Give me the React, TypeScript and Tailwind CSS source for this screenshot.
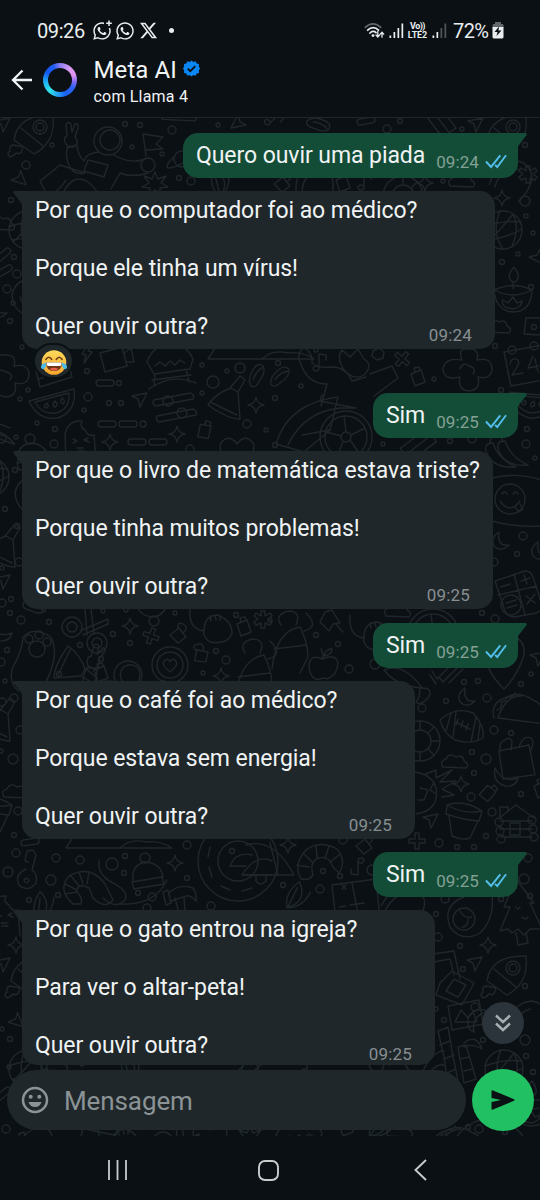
import type { ReactNode } from "react";
import { FaWhatsapp, FaXTwitter } from "react-icons/fa6";

type Message = {
  id: number;
  from: "me" | "ai";
  lines: string[];
  time: string;
  gap: string;
  size: string;
  reaction?: boolean;
};

const messages: Message[] = [
  { id: 1, from: "me", lines: ["Quero ouvir uma piada"], time: "09:24", gap: "mt-[15px]", size: "w-[335px]" },
  {
    id: 2,
    from: "ai",
    lines: ["Por que o computador foi ao médico?", "Porque ele tinha um vírus!", "Quer ouvir outra?"],
    time: "09:24",
    gap: "mt-[13px]",
    size: "h-[158px] w-[473px]",
    reaction: true,
  },
  { id: 3, from: "me", lines: ["Sim"], time: "09:25", gap: "mt-[44px]", size: "w-[145px]" },
  {
    id: 4,
    from: "ai",
    lines: ["Por que o livro de matemática estava triste?", "Porque tinha muitos problemas!", "Quer ouvir outra?"],
    time: "09:25",
    gap: "mt-[13px]",
    size: "h-[158px] w-[471px]",
  },
  { id: 5, from: "me", lines: ["Sim"], time: "09:25", gap: "mt-[14px]", size: "w-[145px]" },
  {
    id: 6,
    from: "ai",
    lines: ["Por que o café foi ao médico?", "Porque estava sem energia!", "Quer ouvir outra?"],
    time: "09:25",
    gap: "mt-[13px]",
    size: "h-[158px] w-[393px]",
  },
  { id: 7, from: "me", lines: ["Sim"], time: "09:25", gap: "mt-[13px]", size: "w-[145px]" },
  {
    id: 8,
    from: "ai",
    lines: ["Por que o gato entrou na igreja?", "Para ver o altar-peta!", "Quer ouvir outra?"],
    time: "09:25",
    gap: "mt-[13px]",
    size: "h-[155px] w-[413px]",
  },
];

// Wallpaper doodles, each one drawn around its own origin
const doodles: Record<string, ReactNode> = {
  rocket: (
    <>
      <path d="M-19 4 C-17 -12 -4 -22 20 -21 C22 -2 16 10 1 18 Z M-19 4 L1 18 M-12 -8 L10 10" />
      <circle cx="7" cy="-9" r="7" />
      <circle cx="7" cy="-9" r="4" />
      <path d="M-20 9 q-4 1 -3 6 q-4 2 0 6 q4 -1 6 -4 q5 2 6 -3 q2 -4 -3 -4 z" />
    </>
  ),
  astronaut: (
    <>
      <circle cx="0" cy="0" r="14" />
      <circle cx="2" cy="-1" r="10" />
      <path d="M-9 11 Q-22 12 -24 20 Q-30 15 -31 4 L-41 7 Q-43 18 -37 28 Q-32 34 -23 32 M4 13 Q22 24 37 18 M40 32 Q24 37 12 32 L3 48 M-23 32 L-48 24 Q-60 34 -68 40 L-60 56 Q-48 49 -42 39" />
      <path d="M-41 5 q-5 -8 0 -10 l-1 -12 q4 -3 5 1 l1 7 l3 -8 q4 -1 3 4 l-3 9 q5 6 -1 10 z" />
      <path d="M-20 19 l20 5 l-4 12 l-20 -6 z M-44 50 Q-34 32 -20 41 Q-9 49 -9 60" />
      <circle cx="40" cy="24" r="7" />
      <path d="M38 15 L35 -7 L55 -4 L48 3 L55 8 L37 9" />
    </>
  ),
  burst: <path d="M0 -11 L3 -4 L11 -7 L6 0 L13 4 L5 5 L5 12 L0 7 L-6 12 L-5 5 L-13 4 L-6 0 L-11 -7 L-3 -4 Z" />,
  planet: (
    <>
      <circle r="8" />
      <path d="M-7 -3 Q-20 9 -12 9 Q-2 8 12 -5 Q18 -12 7 -7" />
    </>
  ),
  leaf: <path d="M-7 -14 Q12 -4 0 14 Q-12 4 -7 -14 M-5 -8 L0 12 M8 -13 Q12 4 0 14" />,
  ball: (
    <>
      <circle r="19" />
      <path d="M-19 -3 Q0 -10 18 -8 M-16 10 Q4 8 19 -1 M-3 -19 Q-12 2 0 19 M10 -16 Q-2 0 -15 12 M10 -16 Q17 -2 9 16" />
    </>
  ),
  lamp: (
    <>
      <path d="M0 -15 Q-8 -20 1 -30 Q9 -19 2 -15 Z M0 -15 L0 -8 M-19 -7 Q0 -16 19 -7 Q18 15 0 15 Q-17 14 -19 -7 Q0 3 19 -7" />
      <path d="M-8 10 Q-12 6 -10 3 L-5 6 L0 0 L4 6 L9 4 Q9 10 0 12 Z" />
    </>
  ),
  cloud: <path d="M-12 5 Q-16 -1 -9 -3 Q-6 -10 1 -5 Q8 -8 9 -1 Q15 2 11 6 Z" />,
  blocks: (
    <>
      <path d="M-14 -8 L16 -8 V10 L-16 8 Z" />
      <circle cx="-6" cy="1" r="2.5" />
      <circle cx="3" cy="1" r="2.5" />
    </>
  ),
  calendar: (
    <>
      <path d="M-21 -12 L18 -19 L24 15 L-14 22 Z M-17 9 L-14 22" />
      <circle cx="-13" cy="-14" r="4" />
      <circle cx="9" cy="-18" r="4" />
      <path d="M-15 0 q1 -6 6 -5 q5 2 1 8 l-5 8 l11 -2 M8 -8 l-5 12 l11 -2 M10 -5 l3 13" />
    </>
  ),
  flower: <path d="M-5 -7 Q-10 -20 2 -18 Q13 -18 10 -7 Q25 -10 25 2 Q24 13 11 10 Q14 23 2 24 Q-10 23 -7 10 Q-23 14 -24 2 Q-22 -10 -5 -7 M-7 2 q3 -8 9 -3 q8 2 4 8" />,
  hex: <path d="M-5 -3 L1 -6 L6 -2 L5 4 L-1 6 L-6 2 Z" />,
  cross: <path d="M-2 -8 h4 v6 h6 v4 h-6 v6 h-4 v-6 h-6 v-4 h6 z" />,
  bottle: <path d="M-6 -3 L4 -7 L8 5 L-2 9 Z M-2 -5 L-3 -9 L2 -10 L3 -7" />,
  note: <path d="M-3 7 a3 2.5 0 1 1 0 -1 L-3 -8 L4 -7 L4 -2" />,
  wheel: (
    <>
      <circle r="26" />
      <circle r="21" />
      <circle r="5" />
      <path d="M0 -5 L-2 -21 M5 -2 L19 -9 M4 3 L13 16 M-3 5 L-9 19 M-5 -1 L-20 -5" />
    </>
  ),
  bike: <path d="M-62 6 Q-46 -28 -9 -31 L6 -31 M-74 5 Q-62 -36 -12 -42 L-20 -9 L-46 13 Z M-20 -9 L-48 -4 M6 -31 L-30 -38 M-30 -38 L-28 -44" />,
  person: <path d="M-46 -27 q-8 8 -4 15 q7 22 27 22 l-6 22 M-46 -27 q10 8 8 16 q8 6 20 4 q14 0 20 14 l14 -4 M-6 -4 q-8 -12 -2 -20 l8 7 l8 -8 l6 10 q10 6 0 16 q-10 6 -20 -5 M20 0 l22 -8 l6 12 l-24 18" />,
  book: <path d="M-18 -2 L14 -12 L18 4 L-14 14 Z M-15 6 L16 -4" />,
  camera: <path d="M-14 -7 L8 -13 L13 6 L-9 12 Z M10 -7 L17 -12 L20 2 L12 2" />,
  bolt: <path d="M1 -9 L-5 1 L-1 2 L-3 10 L5 -1 L1 -2 L4 -8 Z" />,
  grill: <path d="M-24 -3 Q-18 -20 0 -22 Q16 -20 22 -6 L19 4 L-17 9 Z M-16 1 l5 -4 l5 4 l5 -5 l5 4 l5 -5 l5 3 M-16 9 L-17 21 M15 4 L18 17 M-19 15 L20 10 M-22 24 Q0 8 25 18" />,
  pill: <rect x="-9" y="-3" width="18" height="6" rx="3" />,
  sandal: <path d="M-6 10 Q-10 4 -4 -6 Q0 -14 6 -10 Q9 -4 3 4 Q-1 13 -6 10 M-4 4 Q-1 -5 5 -8" />,
  melon: <path d="M-23 -3 L22 -15 Q25 7 6 14 Q-14 17 -23 -3 Z M-17 -2 L17 -11 Q18 5 4 9 Q-10 11 -17 -2 M-5 -1 q-5 4 -1 5 q4 -1 1 -5 M3 -3 q-4 5 0 6 q4 -2 0 -6 M10 -6 q-3 5 1 6 q3 -3 -1 -6" />,
  ice: <path d="M-14 22 L-15 -5 Q-12 -19 2 -18 Q-1 -12 5 -9 Q8 -2 14 -4 L16 22 M-7 0 l4 2 l-4 2 M8 -1 l-4 2 l5 2 M-3 9 h6 M-2 12 h6" />,
  pizza: <path d="M-18 4 Q-10 -8 5 -13 L12 -9 L14 18 Q2 18 -18 4 M4 -13 L14 -25 L19 -21 L12 -9 M-16 1 L11 14" />,
  sliders: (
    <>
      <path d="M-19 -7 L17 -14 q5 1 3 6 L-17 -1 q-5 -2 -2 -6 M-16 9 L20 2 q5 2 3 6 L-14 15 q-4 -2 -2 -6" />
      <circle cx="-5" cy="-6" r="5" />
      <circle cx="9" cy="6" r="5" />
    </>
  ),
  heart: <path d="M0 17 Q-21 2 -16 -8 Q-8 -18 0 -7 Q8 -18 16 -8 Q21 2 0 17" />,
  sparkle: <path d="M0 -8 Q1 -1 8 0 Q1 1 0 8 Q-1 1 -8 0 Q-1 -1 0 -8 Z" />,
  plane: <path d="M-8 -4 L7 -7 L0 7 L-2 -1 Z" />,
  smiley: (
    <>
      <circle r="15" />
      <path d="M-8 -5 q3 -4 5 0 M3 -5 q3 -4 5 0 M-10 2 Q0 16 10 2 M5 8 l4 5 l4 -3 l-3 -5 M-18 -21 Q10 -28 40 -16 M-18 22 Q10 30 40 26" />
    </>
  ),
  moon: <path d="M-2 -9 Q-11 -3 -7 5 Q0 12 8 4 Q-4 6 -2 -9 Z" />,
  calc: (
    <>
      <path d="M-20 -10 L10 -20 Q16 -20 18 -14 L27 14 Q27 20 21 22 L0 26 Q-8 26 -10 20 Z M-1 -17 L10 24 M-17 4 L22 -5 M-14 -4 L-5 -7 M6 -10 L15 -13 M9 -16 L12 -7 M11 5 L20 12 M20 3 L12 13" />
      <circle cx="-4" cy="14" r="10" />
      <path d="M-9 12 l10 -3 M-8 17 l10 -3" />
    </>
  ),
  paw: (
    <>
      <path d="M-21 10 Q-10 -10 -10 -22 Q0 -33 18 -22 Q28 -2 9 30 M-21 10 Q-24 24 -15 32" />
      <circle cx="4" cy="-10" r="8" />
      <circle cx="-4" cy="-20" r="4" />
      <circle cx="6" cy="-24" r="4" />
      <circle cx="14" cy="-17" r="4" />
    </>
  ),
  scissors: (
    <>
      <circle cx="-12" cy="-2" r="10" />
      <circle cx="-12" cy="-2" r="5" />
      <circle cx="13" cy="14" r="10" />
      <circle cx="13" cy="14" r="5" />
      <path d="M-2 1 L24 -10 L24 -5 L-1 6 M3 6 L1 -20 M10 5 L7 -20" />
    </>
  ),
  lock: <path d="M-8 1 L1 -6 L8 3 L0 9 Z M0 -5 q-1 -8 5 -5 q6 4 1 8" />,
  badge: (
    <>
      <circle r="18" />
      <circle r="13" />
      <path d="M0 7 Q-9 0 -6 -4 Q-2 -8 0 -3 Q3 -8 6 -4 Q9 0 0 7" />
    </>
  ),
  knot: <path d="M-22 -19 Q-24 2 -8 4 Q-8 -12 6 -12 Q20 -6 20 6 Q16 18 -2 15 Q-10 10 -8 2 M-2 -11 l1 5 M3 -12 l1 5 M8 -11 l0 4" />,
  snow: <path d="M-2 -8 l4 0 l0 5 l5 -3 l2 3 l-4 3 l4 3 l-2 3 l-5 -2 l0 5 l-4 0 l0 -5 l-5 2 l-2 -3 l4 -3 l-4 -3 l2 -3 l5 3 z" />,
  apple: <path d="M0 -5 Q-14 -11 -14 3 Q-12 17 -3 15 Q1 13 4 15 Q14 12 15 -1 Q12 -11 0 -5 M0 -5 Q0 -12 -2 -15 M1 -8 Q2 -15 9 -15 Q9 -9 1 -8" />,
  pin: <path d="M-10 0 L-1 9 L3 2 L10 1 L2 -12 L-5 -10 Z M6 2 L13 10" />,
  runner: <path d="M-14 30 Q-10 -8 14 -12 Q22 4 22 18 L14 34 M-12 10 L20 6 M-5 -14 Q-12 -24 2 -28 Q16 -28 10 -14 M20 -26 Q34 -12 18 -8" />,
  football: <path d="M-21 -6 Q-6 -20 12 -13 Q24 0 22 12 Q10 19 -6 14 Q-17 8 -21 -6 M-10 -13 L-15 5 M-5 -14 L-8 12 M15 -9 L10 16 M19 -2 L17 14 M-5 -4 L9 3 M-3 -7 l-2 6 M2 -5 l-2 6 M7 -2 l-2 6" />,
  taco: <path d="M-21 10 Q-25 -5 -10 -10 Q4 -18 18 -8 Q30 -4 30 16 L-17 10 Q-10 -12 6 -12 M-18 2 q6 -2 4 -8 q6 0 6 -5 q6 1 8 -4" />,
  mapPin: <path d="M0 24 Q-24 0 -16 -18 Q-8 -30 8 -30 Q22 -24 20 -10 Q14 10 0 24" />,
  ticks: <path d="M-15 -4 l5 8 l14 -14 M-8 2 l4 5 l16 -16 M-17 0 l6 9 M2 8 l14 -14" />,
  feather: <path d="M-24 -12 Q-4 -20 14 6 Q-12 4 -24 -12 M14 6 q12 0 6 10 q-8 8 -12 4 q4 -4 4 -14" />,
  ring: (
    <>
      <circle r="20" />
      <circle r="11" />
      <path d="M0 -11 V-20 M8 -8 L14 -14 M11 0 H20 M8 8 L14 14 M0 11 V20" />
    </>
  ),
  bag: <path d="M-16 0 L14 -6 L20 24 M-16 0 L-12 28 L18 24 M-15 0 q-1 -10 5 -11 q4 -4 7 1 l-1 9 M4 -4 q4 -12 12 -9 q4 4 0 12" />,
  banana: <path d="M-11 -6 Q-3 10 12 4 Q10 13 -1 12 Q-14 8 -11 -6" />,
  pepper: <path d="M-9 -12 Q-4 4 14 12 Q-10 14 -16 -4 Q-18 -12 -9 -12 M-12 -12 q0 -6 4 -8" />,
  pot: <path d="M-17 -16 Q0 -22 18 -10 L15 0 Q0 -1 -18 -7 Z M-15 -5 L-12 15 Q-2 20 6 17 L14 0 M-17 -16 Q0 -6 18 -10" />,
  cabin: (
    <>
      <path d="M-16 -8 L2 -22 L20 -9 M-14 -10 V-20 h8 v4 M-14 -6 H18 M-14 2 H18 M-14 10 H18 M-4 -4 h10 v12 h-10 z" />
      <circle cx="-15" cy="-5" r="4" />
      <circle cx="-14" cy="4" r="4" />
      <circle cx="-13" cy="12" r="4" />
      <circle cx="18" cy="-7" r="4" />
      <circle cx="19" cy="2" r="4" />
      <circle cx="20" cy="10" r="4" />
    </>
  ),
  sun: <path d="M-14 -22 Q4 -20 8 -6 Q12 16 -12 20 M-2 -20 l10 -4 l0 8 l16 -8 l-12 12 l16 -1 l-14 8 l12 6 l-12 2 M-8 -6 l8 2 l-4 10 l-6 0 M6 -12 l-4 8 l6 4" />,
  key: <path d="M-4 2 Q-16 8 -11 18 Q-2 26 6 16 Q8 7 2 3 L6 -12 L3 -17 L-3 -16 L-5 -6 L-2 -5 M-6 13 q4 -4 5 1 q-3 4 -5 -1" />,
  shrimp: <path d="M-12 20 Q-28 6 -16 -8 Q6 -20 20 0 L28 16 Q20 26 8 14 L4 4 Q-8 -2 -8 8 Q-2 14 -4 20 Z M-14 -8 L-6 2 M-6 -12 L-2 0 M4 -12 L2 0 M-20 0 L-8 6 M-20 10 L-8 8 M14 -24 Q12 -8 30 0 Q44 8 40 16 Q30 26 18 14 M34 20 Q70 22 82 -4" />,
  beanie: (
    <>
      <path d="M-14 8 Q-16 -8 -2 -11 Q14 -10 16 4 M-15 9 L15 4 L17 11 L-13 16 Z" />
      <circle cx="-2" cy="-15" r="5" />
    </>
  ),
  hammer: <path d="M-16 -5 L-11 -7 L-8 6 L-13 8 Z M-10 -4 Q0 -14 14 -9 Q18 -4 17 4 Q10 -4 5 0 L6 16 M-4 1 L0 16 M-8 4 L4 0" />,
  road: (
    <>
      <circle r="40" />
      <circle r="20" />
      <path d="M-28 -14 L-30 -4 M-29 6 L-26 16 M-17 25 L-8 29 M4 30 L14 27 M-8 5 Q-2 -10 14 -6 M4 14 Q18 -8 34 0 M-8 5 L8 5 M4 14 L34 14" />
    </>
  ),
  hut: <path d="M-24 -26 L-52 18 H54 Q42 10 28 12 Q12 8 2 18 M-18 4 H44" />,
  croissant: <path d="M-18 18 Q-26 4 -14 -10 Q0 -22 18 -12 Q28 0 20 12 L14 6 Q10 -6 0 -3 Q-10 0 -6 14 Q-10 20 -18 18 M-22 4 L-10 6 M-16 -8 L-7 1 M-3 -16 L-2 -3 M10 -15 L6 -2 M20 -6 L11 1" />,
  umbrella: <path d="M-28 -10 Q0 -18 20 20 H-28 M-4 -12 L4 20 M-18 20 v6 Q-14 32 -8 26 V20" />,
  card: <path d="M-22 -14 L22 -20 L26 20 M-22 -14 L-18 22 M-12 -14 l4 4 m0 -4 l-4 4 M-14 8 l6 -1 M-4 6 l14 -2 M-2 -16 L4 14" />,
  avocado: (
    <>
      <path d="M22 -30 Q30 0 12 18 Q-6 28 -18 12 Q-26 -10 -4 -18 Q6 -22 10 -32" />
      <circle cx="-4" cy="4" r="11" />
      <path d="M-8 -4 q4 8 12 6 M-6 12 q6 0 6 -8" />
    </>
  ),
  tree: <path d="M-4 -36 L-16 -8 L-10 -8 L-20 16 L-12 14 L-8 18 L-2 14 L4 20 L10 14 L22 14 L10 -12 L14 -12 Z M-4 18 L-2 30 L8 28 L6 18 M-4 -8 q2 4 4 0 M2 2 q4 4 6 0" />,
  photos: <path d="M-16 -20 L12 -24 L18 4 M-14 -12 L8 -16 L12 0 M-2 8 L10 -4 L32 8 L20 30 L-6 20 Z M4 16 L12 4 L24 10 L16 22 Z" />,
  frame: (
    <>
      <path d="M-17 -8 L14 -14 L18 10 L-13 16 Z M-10 8 L-4 -4 L3 4 L8 -2 L12 8 Z" />
      <circle cx="10" cy="-7" r="4" />
    </>
  ),
  bamboo: <path d="M-14 -30 L-4 -34 L0 -10 L6 20 L-4 24 L-8 -4 Z M-12 -16 L-2 -20 M-8 -2 L2 -6 M-5 12 L4 8 M6 -14 L14 -16 L24 18 L12 22 Z M8 -2 L17 -4 M12 10 L20 8 M-30 12 Q-20 -10 -8 -10 M-28 20 Q-18 2 -8 4 M12 -18 Q24 -28 30 -12 Q20 -18 12 -14" />,
  balloon: <path d="M-16 18 Q-22 -16 4 -18 Q26 -14 18 18 M-10 18 Q-14 -6 2 -10" />,
};

// name, x, y, rotation
const placed: [string, number, number, number?][] = [
  ["rocket", 33, 137], ["astronaut", 108, 142], ["burst", 155, 184], ["planet", 182, 160], ["leaf", 220, 184],
  ["plane", 3, 126], ["plane", 18, 180, 80], ["book", 180, 112, 20], ["plane", 238, 122, 180],
  ["note", 276, 122, 40], ["sandal", 318, 126, 80], ["pill", 366, 122, -10], ["book", 440, 120, 70], ["plane", 476, 126],
  ["rocket", 506, 137], ["snow", 528, 175], ["balloon", 512, 178, 30], ["lock", 282, 184], ["balloon", 313, 184],
  ["bottle", 342, 184], ["note", 367, 182], ["ring", 403, 197], ["sparkle", 425, 184], ["cloud", 462, 182],
  ["sparkle", 502, 199], ["ball", 503, 231], ["lamp", 513, 298], ["cloud", 498, 328], ["blocks", 540, 327], ["plane", 536, 258, 90],
  ["calendar", 525, 365], ["flower", 467, 368], ["ball", 28, 231], ["cloud", 2, 225], ["pill", 3, 256, -40], ["pill", 4, 272, -30],
  ["balloon", 30, 300, -90], ["moon", -1, 310], ["flower", 4, 374], ["book", 54, 374], ["bolt", 87, 354],
  ["camera", 114, 361], ["grill", 171, 366], ["hut", 260, 342], ["sandal", 257, 377], ["person", 350, 375], ["hex", 378, 355],
  ["cross", 402, 360, 40], ["bottle", 417, 378], ["note", 322, 363], ["wheel", 346, 438], ["bike", 350, 440],
  ["melon", 530, 404, 20], ["book", 418, 445, -20], ["pill", 105, 384], ["melon", 52, 405],
  ["hut", -30, 410, 20], ["ice", 80, 440], ["pizza", 226, 402], ["sliders", 173, 408], ["heart", 237, 452], ["sparkle", 256, 406],
  ["sparkle", 110, 443], ["sparkle", 177, 435], ["plane", 140, 401], ["pill", 107, 425], ["pill", 128, 425], ["pill", 137, 443],
  ["pill", 158, 443], ["bottle", 204, 431, 30], ["beanie", 32, 455], ["sandal", 280, 378, 20],
  ["pepper", 502, 456], ["pepper", 514, 454], ["ball", -10, 478], ["balloon", 33, 498, -90], ["smiley", 510, 500], ["moon", 501, 542],
  ["calc", 515, 592], ["plane", 3, 583], ["moon", 540, 552], ["pizza", 1, 550], ["banana", 0, 630],
  ["sandal", 34, 608, 80], ["paw", 33, 660], ["scissors", 84, 630], ["sparkle", 130, 627], ["cross", 151, 637, 20],
  ["lock", 178, 635], ["badge", 170, 666], ["lock", 200, 656, -40], ["knot", 212, 628], ["snow", 263, 620],
  ["bottle", 243, 628], ["astronaut", 128, 676, 20], ["pizza", 72, 665, 90], ["bottle", 100, 674], ["sparkle", 221, 677],
  ["beanie", 152, 607, 180], ["runner", 286, 640], ["pin", 330, 623], ["apple", 323, 665], ["runner", 250, 668],
  ["knot", 372, 635], ["cloud", 398, 612], ["wheel", 433, 636], ["feather", 408, 683], ["ticks", 447, 676],
  ["mapPin", 504, 666], ["plane", 538, 660], ["moon", 467, 698], ["football", 461, 727], ["taco", 515, 709],
  ["ring", 420, 742], ["cloud", 455, 763], ["bag", 515, 752], ["banana", 506, 775], ["sun", 428, 795], ["sparkle", 461, 785],
  ["bottle", 488, 793, 60], ["pot", 464, 822], ["plane", 431, 822], ["cabin", 514, 828], ["bottle", 540, 790],
  ["pizza", -4, 724], ["cloud", 16, 793], ["pot", -6, 816], ["hut", 118, 831], ["key", 30, 868], ["shrimp", 85, 885],
  ["beanie", 147, 874], ["sparkle", 175, 864], ["hammer", 179, 898], ["road", 238, 862],
  ["leaf", 42, 908, 20], ["ice", 4, 915], ["umbrella", 274, 856], ["sparkle", 288, 846], ["croissant", 319, 862], ["lock", 364, 846],
  ["cross", 417, 842], ["note", 355, 868, 180], ["leaf", 296, 898, 40], ["card", 354, 900], ["balloon", 405, 903, 40],
  ["pill", 30, 843, -8], ["sparkle", 16, 946], ["plane", 3, 966],
  ["avocado", 468, 916], ["tree", 520, 916], ["sparkle", 488, 946], ["photos", 442, 976], ["plane", 475, 965],
  ["rocket", 506, 978], ["frame", 465, 1015], ["banana", 480, 1022, 100], ["bamboo", 452, 1062], ["balloon", 528, 1020],
  ["ball", 504, 1070], ["ball", 28, 1070], ["rocket", 30, 978], ["plane", 15, 1022, 80], ["pill", 3, 1095, -40],
  ["lamp", 531, 1112], ["hammer", 35, 1140], ["road", 490, 1160], ["book", 100, 1132, 30], ["knot", 120, 1142],
  ["scissors", 175, 1145], ["heart", 210, 1138], ["burst", 250, 1138], ["grill", 300, 1140], ["bottle", 345, 1128],
  ["leaf", 380, 1128, 50], ["cloud", 400, 1132], ["taco", 455, 1142], ["cloud", 55, 1066], ["leaf", 130, 1070], ["planet", 250, 1070],
  ["note", 310, 1066], ["knot", 390, 1072],
];

// x, y, radius
const dots: [number, number, number][] = [
  [125, 125, 2.5], [140, 126, 2.5], [172, 131, 4], [132, 148, 2], [52, 146, 2], [26, 166, 4], [162, 155, 2], [179, 179, 2.5], [191, 182, 4],
  [218, 126, 2], [400, 122, 2.5], [387, 130, 4], [462, 130, 2], [525, 146, 2.5], [443, 182, 2], [525, 202, 5], [526, 217, 2], [533, 234, 2],
  [502, 263, 2.5], [518, 255, 2], [531, 288, 2.5], [11, 201, 2.5], [14, 258, 2.5], [17, 275, 4], [7, 290, 4], [13, 304, 2], [10, 322, 2.5],
  [22, 348, 2], [87, 372, 2.5], [119, 384, 2.5], [88, 398, 4], [109, 404, 2.5], [121, 404, 2.5], [84, 411, 2], [20, 400, 2], [28, 391, 2],
  [37, 424, 2], [55, 430, 2.5], [54, 445, 4], [16, 438, 2], [2, 440, 4], [143, 425, 3], [213, 383, 6], [202, 366, 2], [240, 369, 5],
  [227, 372, 2], [202, 394, 2], [247, 425, 4], [266, 431, 2], [190, 450, 4], [316, 351, 2], [278, 364, 2.5], [301, 387, 2], [434, 380, 2],
  [495, 347, 2.5], [501, 391, 2.5], [275, 399, 2.5], [275, 446, 2.5], [383, 445, 2], [450, 442, 2.5], [472, 440, 4], [526, 445, 4], [527, 430, 2.5],
  [535, 459, 2], [15, 471, 2.5], [5, 510, 2.5], [17, 527, 2.5], [19, 563, 4], [2, 569, 2], [11, 600, 2.5], [2, 604, 4], [523, 537, 4],
  [517, 555, 2.5], [494, 563, 4], [482, 614, 2.5], [21, 621, 4], [10, 614, 2.5], [49, 623, 2.5], [103, 612, 2], [126, 611, 2], [113, 635, 2.5],
  [80, 646, 2.5], [101, 660, 2.5], [130, 644, 2.5], [175, 614, 2], [236, 616, 2.5], [216, 652, 2.5], [226, 661, 4], [203, 674, 2], [59, 675, 2.5],
  [7, 651, 2.5], [5, 682, 2], [1, 663, 4], [316, 636, 2.5], [338, 645, 2.5], [349, 670, 4], [270, 621, 2], [375, 665, 5], [495, 620, 4],
  [464, 683, 2.5], [478, 682, 2.5], [446, 702, 2.5], [422, 709, 4], [487, 699, 4], [531, 675, 2], [521, 685, 2.5], [494, 731, 4], [511, 734, 2.5],
  [472, 753, 2.5], [486, 760, 5], [474, 774, 2.5], [471, 798, 4], [492, 813, 4], [521, 795, 2.5], [486, 837, 2.5], [457, 848, 2.5],
  [439, 844, 4], [474, 848, 2.5], [528, 859, 4], [524, 880, 5], [530, 897, 2.5], [445, 900, 4], [501, 900, 2.5], [436, 915, 2.5],
  [438, 938, 4], [460, 947, 2.5], [463, 970, 2.5], [525, 987, 2.5], [444, 1021, 2.5], [483, 1041, 2.5], [525, 1041, 5], [526, 1057, 2.5],
  [533, 1073, 2.5], [436, 1010, 2], [14, 699, 4], [2, 703, 4], [20, 731, 4], [13, 760, 5], [1, 752, 2], [18, 812, 4], [14, 836, 2.5],
  [16, 854, 4], [8, 873, 5], [56, 859, 4], [80, 861, 4], [51, 881, 5], [112, 865, 6], [125, 857, 2.5], [124, 874, 2.5], [29, 901, 2.5],
  [58, 896, 2.5], [138, 894, 2.5], [152, 898, 4], [187, 846, 4], [187, 879, 2.5], [211, 907, 4], [147, 909, 4], [232, 852, 2.5], [323, 872, 2.5],
  [340, 877, 2.5], [320, 890, 4], [283, 886, 2.5], [343, 841, 4], [372, 871, 5], [10, 1040, 2.5], [2, 1030, 2], [6, 1130, 4], [468, 1128, 2.5],
  [479, 1130, 4], [505, 1133, 2.5], [82, 1065, 2], [9, 1068, 2],
];

function Wallpaper() {
  return (
    <svg
      className="absolute -top-px left-0"
      width="540"
      height="1019"
      viewBox="0 118 540 1019"
      fill="none"
      stroke="#20272b"
      strokeWidth="1.4"
      strokeLinejoin="round"
      strokeLinecap="round"
    >
      {placed.map(([name, x, y, turn = 0], i) => (
        <g key={i} transform={`translate(${x} ${y}) rotate(${turn})`}>
          {doodles[name]}
        </g>
      ))}
      {dots.map(([x, y, r], i) => (
        <circle key={i} cx={x} cy={y} r={r} />
      ))}
    </svg>
  );
}

function StatusBar() {
  return (
    <div className="flex h-[52px] items-center pt-[9px] pl-[37px] text-[#e9edef]">
      <span className="w-[47px] text-[20px] leading-none tracking-[-0.4px]">09:26</span>
      <div className="relative ml-2 h-[19px] w-[19px]">
        <FaWhatsapp size={20} />
        <svg className="absolute -top-0.5 -right-0.5" width="9" height="9" viewBox="0 0 9 9">
          <rect width="9" height="9" rx="3" fill="#0b1014" />
          <path d="M5 1.5v5.6M2.2 4.3h5.6" stroke="#e9edef" strokeWidth="1.5" />
        </svg>
      </div>
      <FaWhatsapp className="ml-[4px]" size={20} />
      <FaXTwitter className="ml-[4px]" size={19} />
      <span className="ml-[11px] h-[5px] w-[5px] rounded-full bg-[#e9edef]" />

      <svg className="ml-[190px]" width="21" height="18" viewBox="0 0 21 18" fill="none" strokeLinecap="round">
        <path d="M1.3 5.4C6 .6 12 .6 16.7 5.4" stroke="#61676b" strokeWidth="1.7" />
        <path d="M3.7 8.2C7 4.8 11.3 4.8 14.5 8.2M6 11C8 8.9 10.3 8.9 12 10.6" stroke="#e9edef" strokeWidth="1.8" />
        <circle cx="9" cy="13.6" r="1.4" fill="#e9edef" />
        <path d="M13.8 9.5v5M12 13l1.8 2L15.6 13M18 15.2v-4.7M16.3 12.2l1.7-2 1.7 2" stroke="#e9edef" strokeWidth="1.3" />
      </svg>
      <svg className="ml-[4px]" width="15" height="16" viewBox="0 0 15 16" fill="#e9edef">
        <path d="M.5 12.5h1.7V15H.5zM4.500 9h1.700v6H4.500zM8.500 5h1.700v10H8.500zM12.500.5h1.700V15h-1.700z" />
      </svg>
      <div className="ml-[3px] flex w-[21px] flex-col items-center text-[9px] leading-[9px] font-bold">
        <span className="tracking-[-0.5px]">Vo))</span>
        <span className="tracking-[-0.1px]">LTE2</span>
      </div>
      <svg className="ml-[4px]" width="15" height="16" viewBox="0 0 15 16" fill="#e9edef">
        <path d="M.5 12.5h1.7V15H.5zM4.500 9h1.700v6H4.500z" />
        <path d="M8.500 5h1.700v10H8.500zM12.500.5h1.700V15h-1.700z" fill="#50565a" />
      </svg>
      <span className="ml-[6px] w-[38px] text-[20px] leading-none tracking-[-0.6px]">72%</span>
      <svg className="ml-[1px]" width="12" height="17" viewBox="0 0 12 17">
        <path d="M3 0h6v2h1.5Q11.5 2 11.5 3.5V6H.5V3.5Q.5 2 1.5 2H3z" fill="#61676b" />
        <path d="M.5 5h11v10q0 1.500-1.500 1.500H2Q.5 16.500 .5 15z" fill="#e9edef" />
        <path d="M7 4.500 2.500 10H5.500L4.500 14 9.500 8.500H6.500z" fill="#0b1014" />
      </svg>
    </div>
  );
}

function ChatHeader() {
  return (
    <div className="flex h-[65px] items-start pl-[11px] text-[#f1f4f5]">
      <svg className="mt-[17px]" width="22" height="22" viewBox="0 0 22 22" fill="none" stroke="#f1f4f5" strokeWidth="2.3">
        <path d="M21 11H2M11.500 1.500 2 11l9.500 9.500" />
      </svg>
      <div className="mt-[11px] ml-[10px] h-[34px] w-[34px] rounded-full bg-[conic-gradient(from_0deg,#8a7df0_0deg,#d99af0_40deg,#e292f0_70deg,#8a6cf5_95deg,#2e62f5_120deg,#1a63f5_160deg,#25a5f5_190deg,#2ee5ea_225deg,#20b4f5_260deg,#1458ee_300deg,#1e5cf5_335deg,#8a7df0_360deg)] p-[5px]">
        <div className="h-full w-full rounded-full bg-[#0b1014]" />
      </div>
      <div className="ml-[16.500px]">
        <div className="flex items-center">
          <h1 className="w-[84px] text-[24px] leading-[36px] tracking-[0.1px] whitespace-nowrap">Meta AI</h1>
          <svg className="mb-[3px] ml-[5px]" width="17" height="17" viewBox="0 0 18 18">
            <path
              d="M9 .4 11 2 13.400 1.400 14.500 3.600 16.900 4.200 16.800 6.800 18 9 16.800 11.200 16.900 13.800 14.500 14.400 13.400 16.600 11 16 9 17.600 7 16 4.600 16.600 3.500 14.400 1.100 13.800 1.200 11.200 0 9 1.200 6.800 1.100 4.200 3.500 3.600 4.600 1.400 7 2z"
              fill="#0a86f5"
            />
            <path d="m5 9.200 2.700 2.700L13 6.500" fill="none" stroke="#0b1014" strokeWidth="1.9" />
          </svg>
        </div>
        <p className="text-[16px] leading-[18px] tracking-[0.2px]">com Llama 4</p>
      </div>
    </div>
  );
}

function Reaction() {
  return (
    <div className="absolute -bottom-[30px] left-[11px] flex h-[36px] w-[41px] items-center justify-center rounded-full border-2 border-[#0b1014] bg-[#1f272a] pt-[3px]">
      <svg width="28" height="27" viewBox="0 0 28 27" fill="none">
        <defs>
          <linearGradient id="face" x1="0" y1="0" x2="0" y2="1">
            <stop offset="0" stopColor="#fddb5c" />
            <stop offset="1" stopColor="#f7a52c" />
          </linearGradient>
        </defs>
        <circle cx="14" cy="13.500" r="12.300" fill="url(#face)" />
        <path d="M5.800 10.500q3-4.500 6 0M16.200 10.500q3-4.500 6 0" stroke="#6b3d16" strokeWidth="1.500" strokeLinecap="round" />
        <path d="M6 13.500h16q0 8.500-8 8.500t-8-8.500z" fill="#6c3518" />
        <path d="M6.500 13.500h15q0 3.500-1.500 3.500H8q-1.500 0-1.500-3.500z" fill="#fff" />
        <path d="M9.500 20q4.500-2.500 9 0-4.500 3.500-9 0z" fill="#e8604a" />
        <path d="M6.300 13.500q-6 1.500-5.300 5 1 2.500 3.500 1.200 2-2 1.800-6.200zM21.700 13.500q6 1.500 5.300 5-1 2.500-3.500 1.200-2-2-1.800-6.200z" fill="#4db9e6" />
      </svg>
    </div>
  );
}

function OutgoingBubble({ message }: { message: Message }) {
  return (
    <div className={`flex justify-end pr-[13px] ${message.gap}`}>
      <div className={`flex h-[45px] items-start rounded-l-[15px] rounded-br-[15px] bg-[#134d37] pr-[11px] pl-[13px] ${message.size}`}>
        <span className="pt-[8px] text-[23px] leading-[29px] tracking-[-0.07px] whitespace-nowrap text-[#f0f3f4]">
          {message.lines[0]}
        </span>
        <span className="mt-[19px] ml-auto text-[17px] leading-[20px] tracking-[0.1px] text-[#84a095]">{message.time}</span>
        <svg className="mt-[21px] ml-[6px]" width="22" height="15" viewBox="0 0 23 15" fill="none" stroke="#53bdeb" strokeWidth="2">
          <path d="m1 7.500 5.300 5.700L16 1M10.500 11l2.300 2.300L22 1" />
        </svg>
      </div>
      <svg width="9" height="14" viewBox="0 0 9 14">
        <path d="M-1 0H7.500Q9.600.8 8.300 2.500L0 13H-1z" fill="#134d37" />
      </svg>
    </div>
  );
}

function IncomingBubble({ message }: { message: Message }) {
  return (
    <div className={`flex items-start pl-[13px] ${message.gap}`}>
      <svg width="9" height="14" viewBox="0 0 9 14">
        <path d="M10 0H1.500Q-.6.800.7 2.500L9 13h1z" fill="#1f272a" />
      </svg>
      <div className={`relative rounded-r-[15px] rounded-bl-[15px] bg-[#1f272a] pt-[5px] pl-[13px] ${message.size}`}>
        <div className="flex flex-col gap-[29px] text-[23px] leading-[29px] tracking-[-0.07px] whitespace-nowrap text-[#f0f3f4]">
          {message.lines.map((line) => (
            <p key={line}>{line}</p>
          ))}
        </div>
        <span className="absolute top-[134px] right-[23px] text-[17px] leading-[20px] tracking-[0.2px] text-[#878f93]">
          {message.time}
        </span>
        {message.reaction && <Reaction />}
      </div>
    </div>
  );
}

function Composer() {
  return (
    <div className="mt-[4px] flex items-center gap-[6px] pl-[7px]">
      <div className="flex h-[60px] w-[459px] items-center rounded-full bg-[#1f272a] pl-[14px] text-[#8b9396]">
        <svg width="28" height="28" viewBox="0 0 28 28" fill="none">
          <circle cx="14" cy="14" r="12" stroke="currentColor" strokeWidth="2.500" />
          <circle cx="9.700" cy="10.800" r="2" fill="currentColor" />
          <circle cx="18.300" cy="10.800" r="2" fill="currentColor" />
          <path d="M7.500 16h13q-1.500 5-6.500 5t-6.500-5z" fill="currentColor" />
        </svg>
        <span className="ml-[15px] pt-px text-[26px] leading-[30px] tracking-[-0.1px]">Mensagem</span>
      </div>
      <button className="flex h-[62px] w-[62px] items-center justify-center rounded-full bg-[#21c063]">
        <svg width="24" height="20" viewBox="0 0 24 20">
          <path d="M.5 1.500Q.5-.2 2 .400L23 9.200q1 .8 0 1.600L2 19.600Q.5 20.200.5 18.500V12L10 10 .5 8z" fill="#0b1014" />
        </svg>
      </button>
    </div>
  );
}

function NavBar() {
  return (
    <div className="flex h-[63px] items-center pt-[3px] pl-[107px] text-[#c9cccd]">
      <svg width="21" height="20" viewBox="0 0 21 20" stroke="currentColor" strokeWidth="1.800">
        <path d="M2 0v20M10.500 0v20M19 0v20" />
      </svg>
      <svg className="ml-[130px]" width="21" height="21" viewBox="0 0 21 21" fill="none" stroke="currentColor" strokeWidth="1.900">
        <rect x="1" y="1" width="19" height="19" rx="6" />
      </svg>
      <svg className="ml-[135px]" width="13" height="22" viewBox="0 0 13 22" fill="none" stroke="currentColor" strokeWidth="1.900">
        <path d="M12 1 1.500 11 12 21" />
      </svg>
    </div>
  );
}

export default function App() {
  return (
    <div className="flex h-[1200px] w-[540px] flex-col overflow-hidden bg-[#0b1014] font-[Roboto,sans-serif]">
      <StatusBar />
      <ChatHeader />

      <main className="relative h-[1020px] overflow-hidden border-t border-[#20272b]">
        <Wallpaper />
        <div className="relative flex flex-col">
          {messages.map((message) =>
            message.from === "me" ? (
              <OutgoingBubble key={message.id} message={message} />
            ) : (
              <IncomingBubble key={message.id} message={message} />
            )
          )}
          <Composer />
        </div>

        <button className="absolute top-[884px] left-[482px] flex h-[42px] w-[42px] items-center justify-center rounded-full bg-[#2a343a]">
          <svg width="16" height="18" viewBox="0 0 16 18" fill="none" stroke="#a7afb3" strokeWidth="2.400">
            <path d="m1 1.500 7 6.500 7-6.500M1 9.500 8 16l7-6.500" />
          </svg>
        </button>
      </main>

      <NavBar />
    </div>
  );
}
